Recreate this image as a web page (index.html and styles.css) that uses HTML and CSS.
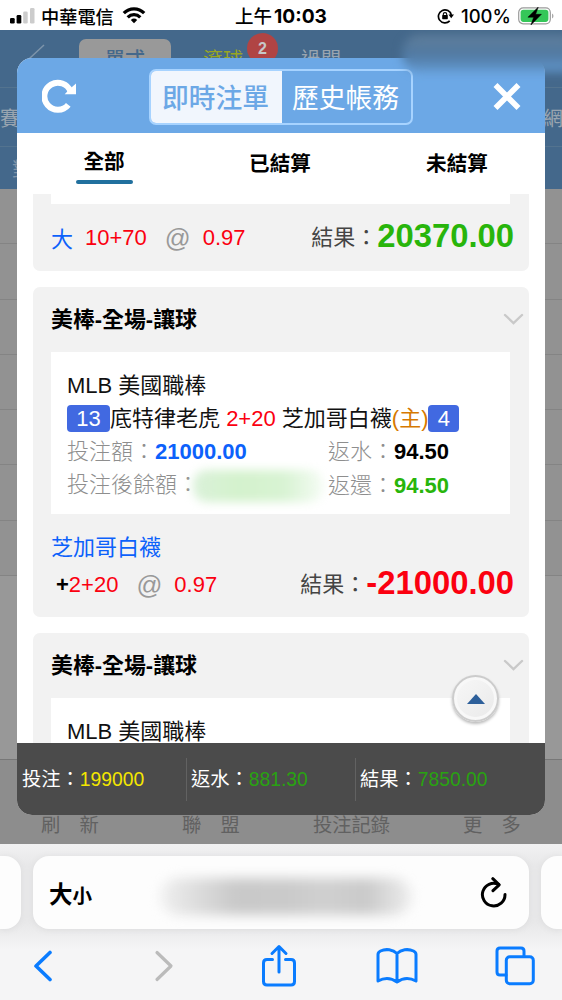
FILE: index.html
```
<!DOCTYPE html>
<html lang="zh-Hant">
<head>
<meta charset="utf-8">
<title>歷史帳務</title>
<link rel="stylesheet" href="styles.css">
</head>
<body>
<div class="phone">
  <header class="status">
    <div class="status-left">
      <svg width="26" height="16" viewBox="0 0 26 16"><rect x="0" y="10" width="4.700" height="5.500" rx="1.300"/><rect x="6.600" y="7" width="4.700" height="8.500" rx="1.300"/><rect x="13.200" y="3.500" width="4.500" height="12" rx="1.300" fill="#ccc"/><rect x="20" y="0" width="4.500" height="15.500" rx="1.300" fill="#ccc"/></svg>
      <span class="carrier">中華電信</span>
      <svg class="wifi" width="24" height="17" viewBox="0 0 24 17" fill="none" stroke="#000" stroke-width="3.300"><path d="M1.800 6.200C7.500.500 16.500.500 22.200 6.200"/><path d="M5.700 10.300C9.200 6.800 14.800 6.800 18.300 10.300"/><path d="M8.800 12.900Q12 10.300 15.200 12.900L12 16.200Z" fill="#000" stroke="none"/></svg>
    </div>
    <div class="status-time"><span>上午</span><b>10:03</b></div>
    <div class="status-right">
      <svg width="17" height="16" viewBox="0 0 17 16" fill="none" stroke="#000" stroke-width="1.700"><path d="M12.700 12.800A6.500 6.500 0 1 1 14.300 7"/><path d="M11.500 6.500H17L14.200 10.300Z" fill="#000" stroke="none"/><rect x="5.200" y="7" width="5.600" height="4.200" rx=".6" fill="#000" stroke="none"/><path d="M6.300 7.300V6Q6.300 4.600 8 4.600T9.700 6V7.300" stroke-width="1.100"/></svg>
      <span class="pct">100%</span>
      <svg width="36" height="18" viewBox="0 0 36 18"><rect x=".7" y=".9" width="31.600" height="15.900" rx="4.500" fill="#fff" stroke="#9b9b9b" stroke-width="1.200"/><rect x="2.600" y="2.800" width="27.800" height="12.100" rx="2.800" fill="#35c759"/><path d="M34 6.500Q35.500 7.200 35.500 9T34 11.500Z" fill="#aaa"/><path d="M20.300 0L9.900 10.200H15.700L12.900 18L23.400 7.300H17.600Z" stroke="#000" stroke-width=".5"/></svg>
    </div>
  </header>

  <main class="site">
    <div class="backdrop">
      <div class="site-nav">
        <svg class="nav-back" width="18" height="24" viewBox="0 0 18 24" fill="none" stroke="#7d94aa" stroke-width="1.500"><path d="M16 1L2 14L10 22"/></svg>
        <span class="nav-pill">單式</span>
        <span class="nav-live">滾球<i class="nav-count">2</i></span>
        <span class="nav-parlay">過關</span>
      </div>
      <div class="site-strip"><span>賽</span><span>網</span></div>
      <div class="site-strip last"><span>對</span></div>
      <div class="site-rows"><i></i><i></i><i></i><i></i><i></i><i></i><i></i></div>
      <div class="site-blank"></div>
      <div class="site-menu"><span>刷　新</span><span>聯　盟</span><span>投注記錄</span><span>更　多</span></div>
    </div>

    <section class="modal">
      <div class="modal-head">
        <svg class="reload" width="34" height="34" viewBox="0 0 34 34"><path d="M26.300 25.800A13.500 13.500 0 1 1 28.500 12.500" fill="none" stroke="#fff" stroke-width="6"/><path d="M34 4.500V15.200H22.700L26 11.800L30 8Z" fill="#fff"/></svg>
        <div class="segments"><span class="seg on">即時注單</span><span class="seg">歷史帳務</span></div>
        <svg class="close" width="28" height="27" viewBox="0 0 28 27" stroke="#fff" stroke-width="5.600"><path d="M2.500 2L25.500 25M25.500 2L2.500 25"/></svg>
      </div>
      <nav class="tabs"><span class="tab active">全部</span><span class="tab">已結算</span><span class="tab">未結算</span></nav>

      <div class="list">
        <article class="card first">
          <div class="detail stub"></div>
          <div class="odds"><span class="blue pick">大</span><span class="red line">10+70</span><span class="at">@</span><span class="red">0.97</span><span class="result">結果：<b class="green">20370.00</b></span></div>
        </article>
        <article class="card second">
          <h2>美棒-全場-讓球<svg width="21" height="13" viewBox="0 0 21 13"><path d="M2 2L10.500 10L19 2"/></svg></h2>
          <div class="detail">
            <p>MLB 美國職棒</p>
            <p><span class="badge">13</span>底特律老虎 <span class="red">2+20</span> 芝加哥白襪<span class="host">(主)</span><span class="badge small">4</span></p>
            <p class="pair"><span>投注額：<b class="blue">21000.00</b></span><span>返水：<b class="black">94.50</b></span></p>
            <p class="pair"><span>投注後餘額：<i class="smudge"></i></span><span>返還：<b class="green">94.50</b></span></p>
          </div>
          <div class="team blue">芝加哥白襪</div>
          <div class="odds"><span class="red handicap"><b class="black">+</b>2+20</span><span class="at">@</span><span class="red">0.97</span><span class="result">結果：<b class="red">-21000.00</b></span></div>
        </article>
        <article class="card third">
          <h2>美棒-全場-讓球<svg width="21" height="13" viewBox="0 0 21 13"><path d="M2 2L10.500 10L19 2"/></svg></h2>
          <div class="detail"><p>MLB 美國職棒</p></div>
        </article>
      </div>

      <footer class="totals"><div>投注：<span class="yellow">199000</span></div><div>返水：<span class="green">881.30</span></div><div>結果：<span class="green">7850.00</span></div></footer>
      <button class="to-top" aria-label="回頂端"><svg width="18" height="10" viewBox="0 0 18 10"><path d="M0 10L9 0L18 10Z" fill="#2d5f9a"/></svg></button>
    </section>
    <i class="haze"></i>
  </main>

  <footer class="browser">
    <div class="address-row">
      <div class="peek left"></div>
      <div class="address">
        <span class="size">大<small>小</small></span>
        <i class="url-smudge"></i>
        <svg width="28" height="32" viewBox="0 0 28 32" fill="none" stroke="#000" stroke-width="3" stroke-linecap="round" stroke-linejoin="round"><path d="M25 17.500A11.300 11.300 0 1 1 18.500 7.400"/><path d="M12.800 1.700L19.200 7.800L13 13.700"/></svg>
      </div>
      <div class="peek right"></div>
    </div>
    <div class="toolbar">
      <svg width="20" height="32" viewBox="0 0 20 32"><path d="M17 2.500L3 16L17 29.500" stroke-width="3.600"/></svg>
      <svg class="off" width="20" height="32" viewBox="0 0 20 32"><path d="M3 2.500L17 16L3 29.500" stroke-width="3.200"/></svg>
      <svg width="34" height="43" viewBox="0 0 34 43"><path d="M10.500 15.500H5Q1.500 15.500 1.500 19V37.500Q1.500 41 5 41H29Q32.500 41 32.500 37.500V19Q32.500 15.500 29 15.500H23.500M17 28V2.500M10 9.500L17 2.500L24 9.500"/></svg>
      <svg width="42" height="36" viewBox="0 0 42 36"><path d="M21 5.500C17 1.500 10 .5 4.500 3Q2 4.300 2 6.500V33Q12 27.500 21 34Q30 27.500 40 33V6.500Q40 4.300 37.500 3C32 .5 25 1.500 21 5.500V34"/></svg>
      <svg width="40" height="40" viewBox="0 0 40 40"><rect x="11.300" y="10.800" width="27" height="27" rx="3.500"/><path d="M11 29H5Q2 29 2 26V5Q2 2 5 2H26Q29 2 29 5V10.500"/></svg>
    </div>
  </footer>
</div>
</body>
</html>
```
FILE: styles.css
```
* { box-sizing: border-box; }
body { margin: 0; font-family: "Liberation Sans", "Noto Sans CJK TC", sans-serif; font-size: 22px; color: #111; }
i { font-style: normal; }
b { font-weight: 700; }
svg { display: block; flex: none; }
.phone { width: 562px; height: 1000px; overflow: hidden; display: flex; flex-direction: column; background: #fff; }

/* status bar */
.status { height: 30px; flex: none; display: grid; grid-template-columns: 235px 202px 125px; align-items: center; line-height: 30px; color: #000; white-space: nowrap; }
.status-left { display: flex; align-items: center; padding-left: 10px; }
.carrier { font-family: "Noto Sans CJK TC", sans-serif; font-size: 18.200px; font-weight: 500; margin-left: 5px; }
.wifi { margin-left: 8px; }
.status-time { display: flex; font-family: "Noto Sans CJK TC", sans-serif; font-size: 18.500px; font-weight: 500; }
.status-time b { font-family: Inter, sans-serif; font-size: 19.200px; font-weight: 700; margin: 1px 0 0 2px; line-height: 30px; }
.status-right { display: flex; align-items: center; }
.pct { font-family: Inter, sans-serif; font-size: 18.500px; font-weight: 500; width: 50px; margin: 1px 7px 0 7px; }

/* dimmed page */
.site { height: 814px; flex: none; position: relative; overflow: hidden; }
.backdrop { height: 814px; display: flex; flex-direction: column; }
.site-nav { height: 57px; background: #44688b; display: flex; align-items: flex-start; color: #9aa5b0; font-size: 20px; }
.nav-back { margin: 14px 0 0 28px; }
.nav-pill { width: 92px; height: 40px; margin: 9px 0 0 33px; border-radius: 7px; background: #999; color: #44688b; font-weight: 500; text-align: center; line-height: 43px; }
.nav-live { margin: 9px 0 0 32px; line-height: 43px; color: #99a622; position: relative; }
.nav-count { position: absolute; left: 44px; top: -6px; width: 31px; height: 31px; border-radius: 50%; background: #b04444; color: #c7c7c7; font: 700 16px/31px "Liberation Sans", sans-serif; text-align: center; }
.nav-parlay { margin: 9px 0 0 58px; line-height: 43px; }
.site-strip { height: 59px; background: #44688b; border-top: 1px solid #53738f; color: #9aa5b0; display: flex; justify-content: space-between; align-items: center; font-size: 20px; padding: 0 1px 0 0; }
.site-strip span { width: 18px; }
.site-strip.last { height: 43px; color: #8195a9; padding-left: 12px; }
.site-rows { background: #929292; }
.site-rows i { display: block; height: 55.300px; border-bottom: 1px solid #848484; }
.site-blank { flex: 1; background: #989898; border-bottom: 1px solid #777; }
.site-menu { height: 84px; background: #8d8d8d; display: grid; grid-template-columns: 141px 131px 150px 1fr; align-items: end; color: #616161; font-size: 19.300px; line-height: 36px; white-space: nowrap; }
.site-menu span { padding-left: 41px; }
.haze { position: absolute; left: 402px; top: 5px; width: 180px; height: 37px; border-radius: 18px; background: linear-gradient(#617f9b, #5078a0 50%, #6298ce); filter: blur(5px); }

/* betting sheet */
.modal { position: absolute; left: 17px; top: 28px; width: 528px; height: 757px; border-radius: 15px; overflow: hidden; background: #fff; display: flex; flex-direction: column; }
.modal-head { height: 75px; flex: none; background: #6ca8e6; display: flex; align-items: center; }
.reload { margin-left: 25px; }
.segments { width: 264px; height: 56px; margin: 2px 0 0 73px; border: 2px solid #a7d3ff; border-radius: 7px; display: grid; grid-template-columns: 131px 1fr; overflow: hidden; }
.seg { color: #fff; font-size: 26.800px; line-height: 57px; text-align: center; white-space: nowrap; }
.seg.on { background: #f1f6fd; color: #6ca8e6; font-weight: 500; text-indent: -2px; }
.seg + .seg { text-indent: -2px; }
.close { margin: 1px 0 0 80px; }
.tabs { height: 61px; flex: none; display: grid; grid-template-columns: 174px 178px 176px; justify-items: center; align-items: start; font-size: 20.600px; font-weight: 700; line-height: 30px; padding-top: 15px; color: #000; }
.tab { padding-top: 1px; }
.tab.active { width: 57px; padding: 0; text-align: center; margin-top: -1px; }
.tab.active::after { content: ""; display: block; height: 4px; margin-top: 3px; border-radius: 2px; background: #21709e; }
.list { flex: 1; min-height: 0; overflow: hidden; padding: 0 16px; white-space: nowrap; }
.card { background: #f2f2f2; border-radius: 7px; margin-bottom: 16px; padding: 0 15px 0 18px; }
.card.first { height: 77px; border-radius: 0 0 7px 7px; }
.card.second { height: 330px; }
.card.third { height: 330px; }
.card h2 { margin: 0 -10px 0 0; height: 65px; font-size: 21.900px; line-height: 64px; color: #000; display: flex; justify-content: space-between; align-items: center; }
.card h2 svg { fill: none; stroke: #c9c9c9; stroke-width: 2.400; stroke-linecap: round; }
.detail { width: 459px; height: 162px; background: #fff; padding: 17px 16px; }
.detail.stub { height: 10px; padding: 0; }
.detail p { margin: 0; height: 33px; line-height: 33px; color: #111; display: flex; align-items: center; white-space: pre; }
.detail .pair { color: #8e8e8e; font-weight: 300; display: grid; grid-template-columns: 261px 1fr; }
.badge { width: 43px; height: 27px; border-radius: 4px; background: #4169e1; color: #fff; line-height: 27px; text-align: center; }
.badge.small { width: 31px; }
.host { color: #d67900; }
.smudge { display: inline-block; vertical-align: middle; width: 130px; height: 32px; margin: 0 0 0 -6px; border-radius: 14px; background: linear-gradient(90deg, #daf1d9, #d4f2cd 35%, #d8f3d3 70%, #f5fcf4); filter: blur(5px); }
.team { height: 36px; line-height: 36px; margin-top: 16px; }
.odds { display: flex; align-items: center; height: 38px; }
.first .odds { margin-top: 15px; }
.pick { margin-top: -2px; }
.line { margin-left: 12px; }
.handicap { margin-left: 5px; }
.at { font-size: 25.500px; color: #999; margin: 0 12px 0 18px; }
.result { margin-left: auto; color: #444; display: flex; align-items: center; line-height: 38px; }
.result b { font-size: 32.800px; margin-top: -5px; }
.blue { color: #0c61fb; }
.red { color: #fb0010; }
.green { color: #28b50b; }
.black { color: #000; }
.yellow { color: #f4e600; }
.totals { height: 72px; flex: none; background: #4b4b4b; color: #fff; display: grid; grid-template-columns: 170px 169px 189px; align-items: center; font-size: 19.300px; line-height: 43px; white-space: nowrap; }
.totals div { padding-left: 4px; border-right: 1px solid #626262; }
.totals div:first-child { padding-left: 5px; }
.totals div:last-child { border: 0; }
.totals .green { color: #29a211; }
.to-top { position: absolute; left: 435px; top: 617px; width: 47px; height: 47px; padding: 0; border: 2px solid #ccc; border-radius: 50%; background: linear-gradient(135deg, #f8f8f8, #e9e9e9); box-shadow: 0 2px 3px #bbb, inset 0 0 0 3px #f8f8f8; display: grid; place-items: center; }

/* browser controls */
.browser { height: 156px; flex: none; background: linear-gradient(#f1f1f2, #e8e8e9 14%, #e8e8e9 50%, #f5f5f6 68%); padding-top: 12px; }
.address-row { height: 73px; display: grid; grid-template-columns: 21px 496px 21px; gap: 12px; }
.address, .peek { background: #fdfdfd; box-shadow: 0 1px 6px #dcdcdd; }
.address { border-radius: 16px; display: flex; align-items: center; padding: 0 21px 0 16px; }
.peek.left { border-radius: 0 16px 16px 0; }
.peek.right { border-radius: 16px 0 0 16px; }
.size { font-family: "Noto Sans CJK TC", sans-serif; font-size: 23.500px; font-weight: 700; color: #000; width: 111px; }
.size small { font-size: 19.500px; }
.url-smudge { width: 252px; height: 37px; margin-top: 8px; border-radius: 19px; background: linear-gradient(90deg, #f0f0f0, #e0e0e0 12%, #c9c9c9 30%, #cacaca 50%, #d0d0d0 65%, #cacaca 82%, #eee); filter: blur(6px); }
.address svg { margin-left: auto; }
.toolbar { height: 71px; display: grid; grid-template-columns: 86px 156px 74px 161px 75px; justify-items: center; align-items: center; padding-top: 2px; }
.toolbar svg { fill: none; stroke: #0a7cff; stroke-width: 3; stroke-linejoin: round; stroke-linecap: round; }
.toolbar .off { stroke: #bbb; }
```
